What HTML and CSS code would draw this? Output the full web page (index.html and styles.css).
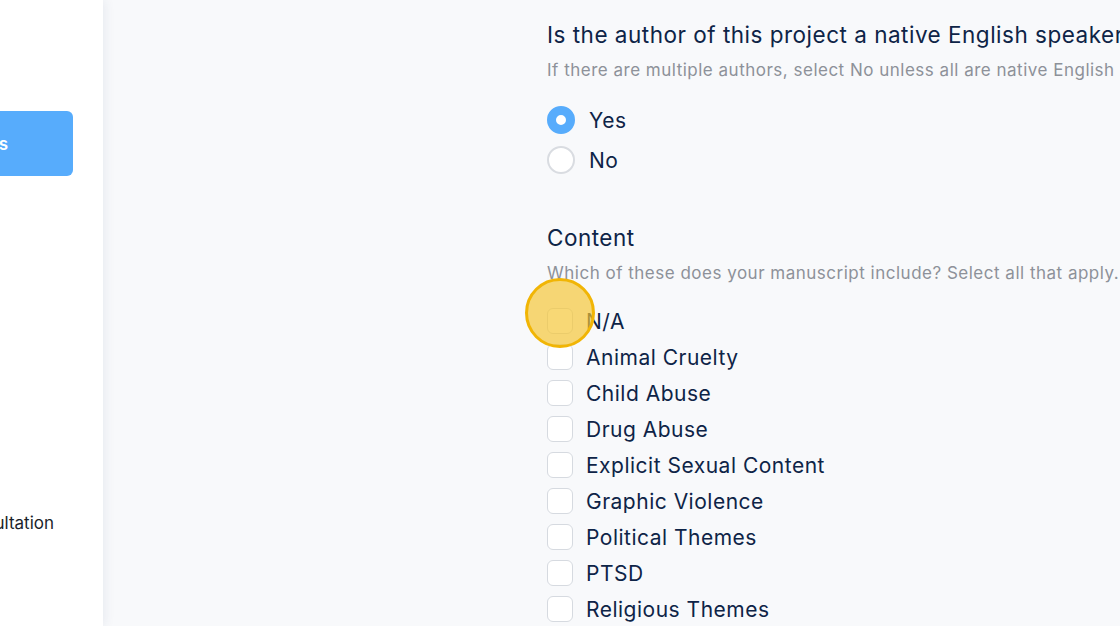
FILE: index.html
```html
<!DOCTYPE html>
<html lang="en">
<head>
    <meta charset="UTF-8">
    <meta name="viewport" content="width=device-width, initial-scale=1.0">
    <title>Manuscript Questionnaire</title>
    <link rel="stylesheet" href="styles.css">
</head>
<body>
    <div class="app">
        <aside class="sidebar">
            <nav class="nav">
                <a class="nav-item active" href="#">Project Details</a>
                <a class="nav-item link" href="#">Book a Consultation</a>
            </nav>
        </aside>

        <main class="main">
            <form class="form">
                <section class="question">
                    <h2>Is the author of this project a native English speaker?</h2>
                    <p class="hint">If there are multiple authors, select No unless all are native English speakers.</p>
                    <div class="options">
                        <label class="option">
                            <span class="radio checked"></span> Yes
                        </label>
                        <label class="option">
                            <span class="radio"></span> No
                        </label>
                    </div>
                </section>

                <section class="question content">
                    <h2>Content</h2>
                    <p class="hint">Which of these does your manuscript include? Select all that apply.</p>
                    <div class="checks">
                        <label class="check"><span class="box"></span> N/A</label>
                        <label class="check"><span class="box"></span> Animal Cruelty</label>
                        <label class="check"><span class="box"></span> Child Abuse</label>
                        <label class="check"><span class="box"></span> Drug Abuse</label>
                        <label class="check"><span class="box"></span> Explicit Sexual Content</label>
                        <label class="check"><span class="box"></span> Graphic Violence</label>
                        <label class="check"><span class="box"></span> Political Themes</label>
                        <label class="check"><span class="box"></span> PTSD</label>
                        <label class="check"><span class="box"></span> Religious Themes</label>
                    </div>
                </section>
            </form>

            <!-- click highlight -->
            <div class="click-dot"></div>
        </main>
    </div>
</body>
</html>
```

FILE: styles.css
```css
body {
    margin: 0;
    font-family: Inter, "Noto Sans", sans-serif;
    color: #0e2447;
    background-color: #f8f9fb;
    overflow: hidden;
}

.app {
    display: flex;
    height: 626px;
}

.sidebar {
    width: 103px;
    flex-shrink: 0;
    background: #fff;
    overflow: hidden;
    box-shadow: 2px 0 10px rgba(40, 60, 110, 0.08);
    position: relative;
    z-index: 1;
}

.nav {
    width: 223px;
    margin-left: -150px;
    padding-top: 111px;
    display: flex;
    flex-direction: column;
}

.nav-item {
    display: flex;
    align-items: center;
    justify-content: flex-end;
    text-decoration: none;
    font-size: 17px;
    color: #1b1f2a;
}

.nav-item.active {
    height: 65px;
    background-color: #57acfc;
    color: #fff;
    font-weight: 600;
    border-radius: 6px;
    padding-right: 65px;
}

.nav-item.link {
    margin-top: 334px;
    height: 26px;
    padding-right: 19px;
}

.main {
    flex: 1;
    position: relative;
    padding-left: 444px;
    padding-top: 20px;
}

.form {
    white-space: nowrap;
}

h2 {
    margin: 0;
    font-size: 22.5px;
    font-weight: 400;
    letter-spacing: 0.5px;
    line-height: 30px;
}

.hint {
    margin: 8px 0 0;
    font-size: 17px;
    letter-spacing: 0.5px;
    line-height: 24px;
    color: #8d9199;
}

.options {
    margin-top: 18px;
}

.option, .check {
    display: flex;
    align-items: center;
    font-size: 21px;
    letter-spacing: 0.5px;
    color: #0e2447;
}

.option {
    height: 40px;
    gap: 14px;
}

.radio {
    width: 28px;
    height: 28px;
    box-sizing: border-box;
    border-radius: 50%;
    border: 2px solid #d9dce1;
    background: #fff;
}

.radio.checked {
    border: 9px solid #57acfc;
}

.content {
    margin-top: 43px;
}

.checks {
    margin-top: 18px;
}

.check {
    height: 36px;
    gap: 13px;
}

.box {
    width: 26px;
    height: 26px;
    box-sizing: border-box;
    border: 1.5px solid #d6dae0;
    border-radius: 6px;
    background: #fff;
}

.click-dot {
    position: absolute;
    left: 422px;
    top: 278px;
    width: 70px;
    height: 70px;
    box-sizing: border-box;
    border-radius: 50%;
    border: 3px solid #f1b505;
    background: rgba(245, 198, 52, 0.68);
}
```
